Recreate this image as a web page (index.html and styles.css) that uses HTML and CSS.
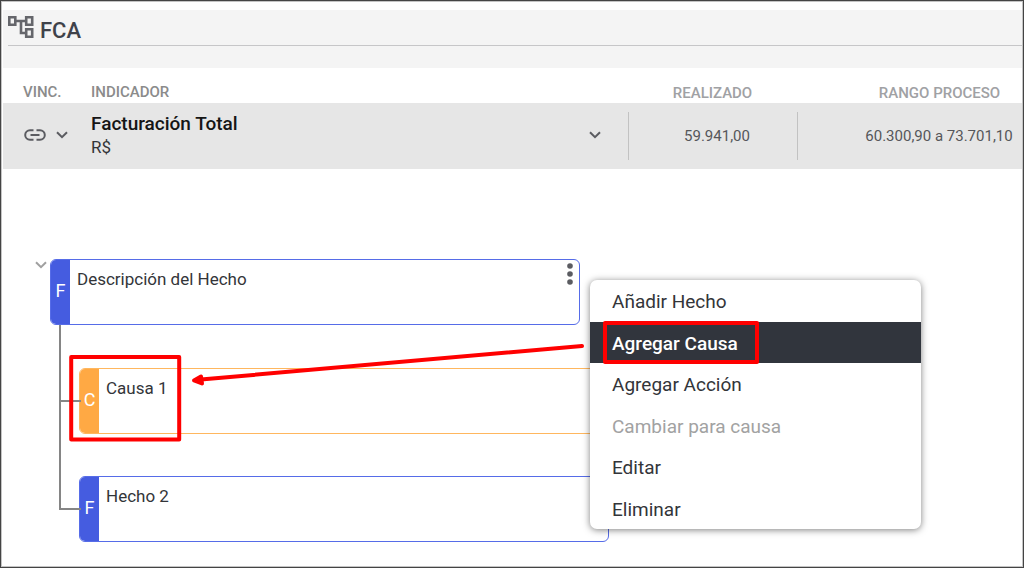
FILE: index.html
```html
<!DOCTYPE html>
<html lang="es">
<head>
<meta charset="utf-8">
<meta name="viewport" content="width=device-width, initial-scale=1">
<title>FCA</title>
<link rel="stylesheet" href="styles.css">
</head>
<body>
<main class="window">
  <header class="page-header">
    <div class="title-bar">
      <svg class="title-icon" viewBox="0 0 26 22" aria-hidden="true">
        <path d="M1.300 1.300h6v7.400h-6zM18.200 1.300h6v7.400h-6zM18.200 13.300h6v7.400h-6zM8 5h10M13 5v12h5"/>
      </svg>
      <h1 class="title">FCA</h1>
    </div>
  </header>

  <table class="indicators">
    <thead>
      <tr>
        <th class="col-link" scope="col">VINC.</th>
        <th class="col-name" scope="col">INDICADOR</th>
        <th class="col-actual" scope="col">REALIZADO</th>
        <th class="col-range" scope="col">RANGO PROCESO</th>
      </tr>
    </thead>
    <tbody>
      <tr>
        <td>
          <div class="link-cell">
            <button class="icon-button" type="button" aria-label="Vínculo">
              <svg class="link-icon" viewBox="0 0 22 12" aria-hidden="true"><path d="M9.500 1.200H6a4.800 4.800 0 0 0 0 9.600h3.500M12.500 1.200H16a4.800 4.800 0 0 1 0 9.600h-3.500M6.500 6h9"/></svg>
            </button>
            <button class="icon-button" type="button" aria-label="Ver vínculos">
              <svg class="chevron" viewBox="0 0 12 8" aria-hidden="true"><path d="M1 1.200l5 5 5-5"/></svg>
            </button>
          </div>
        </td>
        <td>
          <div class="name-cell">
            <div>
              <div class="name">Facturación Total</div>
              <div class="unit">R$</div>
            </div>
            <button class="icon-button" type="button" aria-label="Desplegar indicador">
              <svg class="chevron" viewBox="0 0 12 8" aria-hidden="true"><path d="M1 1.200l5 5 5-5"/></svg>
            </button>
          </div>
        </td>
        <td><div class="value-cell">59.941,00</div></td>
        <td><div class="value-cell range">60.300,90 a 73.701,10</div></td>
      </tr>
    </tbody>
  </table>

  <section class="tree">
    <button class="icon-button toggle" type="button" aria-label="Contraer">
      <svg class="chevron" viewBox="0 0 12 8" aria-hidden="true"><path d="M1 1.200l5 5 5-5"/></svg>
    </button>
    <div class="branch">
      <article class="node fact">
        <span class="tag">F</span>
        <p class="text">Descripción del Hecho</p>
        <button class="icon-button more" type="button" aria-label="Opciones">
          <svg class="dots" viewBox="0 0 6 22" aria-hidden="true"><circle cx="3" cy="3" r="2.800"/><circle cx="3" cy="11" r="2.800"/><circle cx="3" cy="19" r="2.800"/></svg>
        </button>
      </article>
      <div class="children">
        <div class="child">
          <article class="node cause"><span class="tag">C</span><p class="text">Causa 1</p></article>
        </div>
        <div class="child">
          <article class="node fact"><span class="tag">F</span><p class="text">Hecho 2</p></article>
        </div>
      </div>

      <div class="menu" role="menu">
        <button class="item" type="button" role="menuitem">Añadir Hecho</button>
        <button class="item active" type="button" role="menuitem">Agregar Causa</button>
        <button class="item" type="button" role="menuitem">Agregar Acción</button>
        <button class="item" type="button" role="menuitem" disabled>Cambiar para causa</button>
        <button class="item" type="button" role="menuitem">Editar</button>
        <button class="item" type="button" role="menuitem">Eliminar</button>
      </div>

      <svg class="marks" viewBox="0 0 720 200" aria-hidden="true">
        <rect x="21.200" y="98" width="108" height="82.500"/>
        <rect x="555" y="64" width="152" height="39"/>
        <path d="M532 87L151 120.500"/>
        <path class="head" d="M144 121.500l7-4 1 7z"/>
      </svg>
    </div>
  </section>
</main>
</body>
</html>
```

FILE: styles.css
```css
* {
  box-sizing: border-box;
}

body {
  margin: 0;
  font-family: Roboto, "Liberation Sans", sans-serif;
  color: #333539;
  background: #fff;
}

.window {
  min-height: 100vh;
  padding: 9px 1px 0 2px;
  border: 1px solid #444;
  box-shadow: inset 0 0 0 1px #c4c4c4;
  overflow: hidden;
}

.page-header {
  height: 58px;
  padding-left: 5px;
  background: #f4f4f4;
}

.title-bar {
  display: flex;
  align-items: flex-start;
  gap: 6px;
  height: 36px;
  padding-top: 6px;
  border-bottom: 1px solid #c6c6c8;
}

.title-icon {
  width: 26px;
  height: 22px;
  fill: none;
  stroke: #65666b;
  stroke-width: 2.6;
}

.title {
  margin: 2px 0 0;
  font-size: 22px;
  line-height: 26px;
  font-weight: 500;
  color: #3f424a;
}

.indicators {
  width: 100%;
  border-collapse: collapse;
  table-layout: fixed;
}

.indicators th {
  height: 35px;
  padding: 13px 0 0;
  font-size: 15px;
  line-height: 22px;
  font-weight: 500;
  text-align: left;
  color: #8b8b8b;
}

.indicators th.col-link {
  width: 88px;
  padding-left: 20px;
}

.indicators th.col-actual {
  width: 169px;
  padding-top: 15px;
  line-height: 20px;
  text-align: center;
  color: #a0a1a4;
}

.indicators th.col-range {
  width: 225px;
  padding: 15px 0 0 60px;
  line-height: 20px;
  text-align: center;
  color: #a0a1a4;
}

.indicators td {
  height: 66px;
  padding: 0;
  background: #e6e6e6;
}

.link-cell {
  display: flex;
  align-items: center;
  gap: 10px;
  padding: 0 0 2px 21px;
}

.icon-button {
  display: flex;
  padding: 0;
  border: 0;
  background: none;
  color: #5b5c61;
}

.link-icon {
  width: 22px;
  height: 12px;
  fill: none;
  stroke: currentColor;
  stroke-width: 2;
}

.chevron {
  width: 12px;
  height: 8px;
  fill: none;
  stroke: currentColor;
  stroke-width: 2;
}

.name-cell {
  display: flex;
  align-items: center;
  justify-content: space-between;
  padding: 0 27px 2px 0;
}

.name {
  font-size: 19px;
  line-height: 24px;
  font-weight: 500;
  color: #151515;
}

.unit {
  font-size: 17px;
  line-height: 22px;
}

.value-cell {
  height: 48px;
  padding-left: 8px;
  border-left: 1px solid #c2c2c2;
  font-size: 15px;
  line-height: 48px;
  text-align: center;
  white-space: nowrap;
  color: #55565a;
}

.value-cell.range {
  padding: 0 8px 0 66px;
}

.tree {
  display: flex;
  align-items: flex-start;
  gap: 3px;
  padding: 90px 0 24px 32px;
}

.toggle {
  margin-top: 2px;
  color: #a0a0a0;
}

.branch {
  position: relative;
  flex: none;
}

.node {
  display: flex;
  width: 530px;
  height: 66px;
  border: 1px solid;
  border-radius: 6px;
  overflow: hidden;
  background: #fff;
}

.fact {
  border-color: #566ce8;
}

.cause {
  border-color: #ffb75e;
}

.tag {
  display: flex;
  align-items: center;
  justify-content: center;
  width: 19px;
  padding-bottom: 4px;
  font-size: 18px;
  color: #fff;
}

.fact .tag {
  background: #455ce0;
}

.cause .tag {
  background: #ffa944;
}

.text {
  flex: 1;
  margin: 0;
  padding: 7px;
  font-size: 17px;
  line-height: 24px;
}

.more {
  align-self: flex-start;
  padding: 3px 6px 0 0;
}

.dots {
  width: 6px;
  height: 22px;
  fill: currentColor;
}

.children {
  padding: 1px 0 0 9px;
}

.child {
  position: relative;
  padding: 42px 0 0 20px;
}

.child::before {
  content: "";
  position: absolute;
  top: -1px;
  left: 0;
  width: 20px;
  height: 75px;
  border: solid #858585;
  border-width: 0 0 2px 2px;
}

.child:not(:last-child)::after {
  content: "";
  position: absolute;
  top: 74px;
  bottom: 0;
  left: 0;
  width: 2px;
  background: #858585;
}

.menu {
  position: absolute;
  top: 21px;
  left: 540px;
  display: flex;
  flex-direction: column;
  width: 331px;
  height: 249px;
  border-radius: 7px;
  background: #fff;
  box-shadow: 0 1px 7px rgba(0, 0, 0, 0.5);
}

.item {
  flex: 1;
  padding: 2px 22px 0;
  border: 0;
  background: none;
  font-family: inherit;
  font-size: 19px;
  text-align: left;
  color: #333539;
}

.item.active {
  background: #31353d;
  font-weight: 500;
  color: #fff;
}

.item:disabled {
  color: #a2a2a2;
}

.marks {
  position: absolute;
  top: 0;
  left: 0;
  width: 720px;
  height: 200px;
  fill: none;
  stroke: #f00;
  stroke-width: 4;
  stroke-linejoin: round;
  stroke-linecap: round;
  pointer-events: none;
}

.head {
  fill: #f00;
}
```
